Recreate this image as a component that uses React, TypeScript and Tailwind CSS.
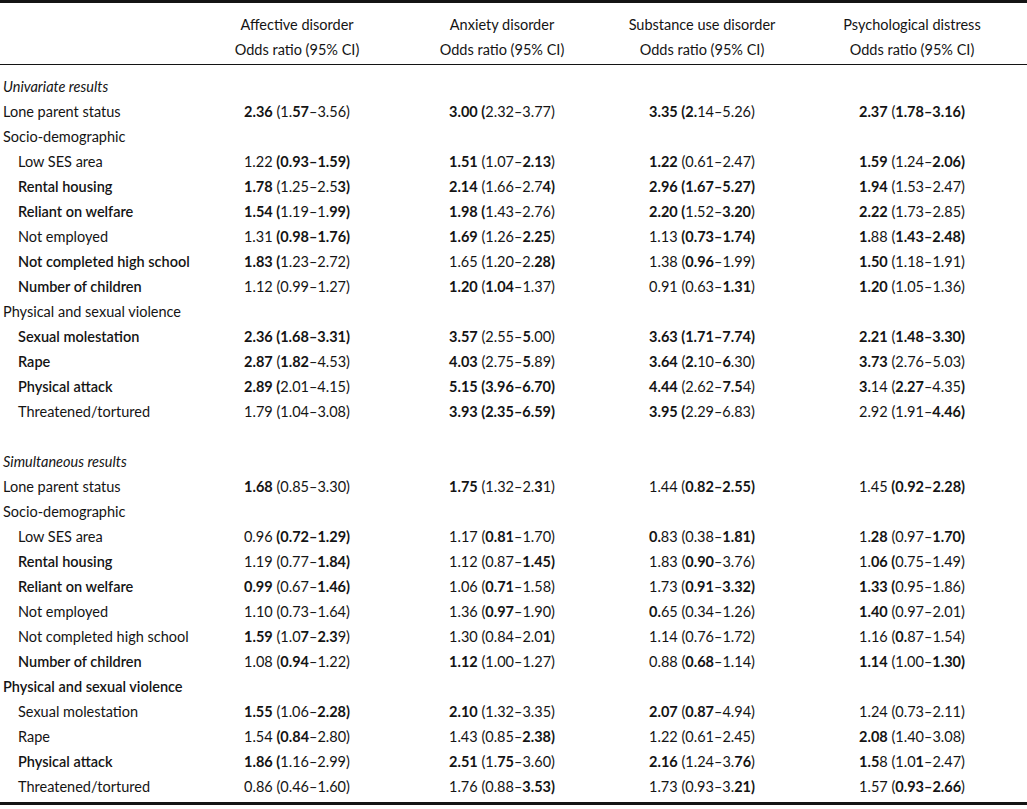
import React from "react";

// bold parts are marked with ** in the strings
function Rich({ text }: { text: string }) {
  const parts = text.split("**");
  return (
    <>
      {parts.map((p, i) =>
        i % 2 === 1 ? (
          <span key={i} className="font-bold">
            {p}
          </span>
        ) : (
          <span key={i}>{p}</span>
        )
      )}
    </>
  );
}

type Row =
  | { kind: "section"; label: string }
  | { kind: "group"; label: string; bold?: boolean }
  | { kind: "blank" }
  | { kind: "data"; label: string; indent?: boolean; bold?: boolean; vals: string[] };

const univariate: Row[] = [
  { kind: "section", label: "Univariate results" },
  { kind: "data", label: "Lone parent status", vals: ["**2.36** (1.**57**–3.56)", "**3.00 (**2.32–3.77)", "**3.35 (2.**14–5.26)", "**2.37** (**1.78–3.16)**"] },
  { kind: "group", label: "Socio-demographic" },
  { kind: "data", label: "Low SES area", indent: true, vals: ["1.22 **(0.93–1.59)**", "**1.51** (1.07–**2.13**)", "**1.22** (0.61–2.47)", "**1.59** (1.24–**2.06)**"] },
  { kind: "data", label: "Rental housing", indent: true, bold: true, vals: ["**1.78** (1.25–2.5**3)**", "**2.14** (1.66–2.7**4)**", "**2.96 (1.67–5.27)**", "**1.94** (1.53–2.47)"] },
  { kind: "data", label: "Reliant on welfare", indent: true, bold: true, vals: ["**1.54 (**1.19–1.**99)**", "**1.98 (**1.43–2.76)", "**2.20 (**1.52–**3.20**)", "**2.22** (1.73–2.85)"] },
  { kind: "data", label: "Not employed", indent: true, vals: ["1.31 **(0.98–1.76)**", "**1.69** (1.26–**2.25**)", "1.13 **(0.73–1.74)**", "**1.**88 (**1.43–2.48)**"] },
  { kind: "data", label: "Not completed high school", indent: true, bold: true, vals: ["**1.83 (**1.23–2.72)", "1.65 (1.20–2.**28)**", "1.38 (**0.96**–1.99)", "**1.50** (1.18–1.91)"] },
  { kind: "data", label: "Number of children", indent: true, bold: true, vals: ["1.12 (0.99–1.27)", "**1.20** (**1.04**–1.37)", "0.91 (0.63–**1.31**)", "**1.20** (1.05–1.36)"] },
  { kind: "group", label: "Physical and sexual violence" },
  { kind: "data", label: "Sexual molestation", indent: true, bold: true, vals: ["**2.36 (1.68–3.31)**", "**3.57** (2.55–**5**.00)", "**3.63 (1.71–7.74)**", "**2.21** (**1.48–3.30)**"] },
  { kind: "data", label: "Rape", indent: true, bold: true, vals: ["**2.87** (**1.82**–4.53)", "**4.03** (2.75–**5**.89)", "**3.64** (**2.**10–**6**.30)", "**3.73** (2.76–5.03)"] },
  { kind: "data", label: "Physical attack", indent: true, bold: true, vals: ["**2.89 (**2.01–4.15)", "**5.15 (3.96–6.70)**", "**4.44** (2.62–**7.5**4)", "**3.**14 (**2.27**–4.35**)**"] },
  { kind: "data", label: "Threatened/tortured", indent: true, vals: ["1.79 (1.04–3.08)", "**3.93 (2.35–6.59)**", "**3.95 (**2.29–6.83)", "2.92 (1.91–**4.46)**"] },
];

const simultaneous: Row[] = [
  { kind: "section", label: "Simultaneous results" },
  { kind: "data", label: "Lone parent status", vals: ["**1.68** (0.85–3.30)", "**1.75** (1.32–2.**3**1)", "1.44 (**0.82–2.55)**", "1.45 **(0.92–2.28)**"] },
  { kind: "group", label: "Socio-demographic" },
  { kind: "data", label: "Low SES area", indent: true, vals: ["0.96 **(0.72–1.29)**", "1.17 (**0.81**–1.70)", "**0.**83 (0.38–**1.81)**", "1.**28** (0.97–**1.70)**"] },
  { kind: "data", label: "Rental housing", indent: true, bold: true, vals: ["1.19 (0.77–**1.84)**", "1.12 (0.87–**1.45)**", "1.83 (**0.90**–3.76)", "1.**06 (**0.75–1.49)"] },
  { kind: "data", label: "Reliant on welfare", indent: true, bold: true, vals: ["**0.99** (0.67–**1.46)**", "1.06 (**0.71**–1.58)", "1.73 (**0.91**–**3.32)**", "**1.33 (**0.95–1.86)"] },
  { kind: "data", label: "Not employed", indent: true, vals: ["1.10 (0.73–1.64)", "1.36 (**0.97**–1.90)", "**0.**65 (0.34–1.26)", "**1.40** (0.97–2.01)"] },
  { kind: "data", label: "Not completed high school", indent: true, vals: ["**1.59** (1.0**7**–**2.3**9)", "1.30 (0.84–2.0**1**)", "1.14 (0.76–1.72)", "1.16 (**0.**87–1.54)"] },
  { kind: "data", label: "Number of children", indent: true, bold: true, vals: ["1.08 (**0.94**–1.22)", "**1.12** (1.00–1.27)", "0.88 (**0.68**–1.14)", "**1.14** (1.00–**1.30)**"] },
  { kind: "group", label: "Physical and sexual violence", bold: true },
  { kind: "data", label: "Sexual molestation", indent: true, vals: ["**1.55** (1.06–**2.28)**", "**2.10** (1.32–3.35)", "**2.07** (**0.87**–4.94)", "1.24 (0.73–2.11)"] },
  { kind: "data", label: "Rape", indent: true, vals: ["1.54 **(0.84**–2.80)", "1.43 (0.85–**2.38)**", "1.22 (0.61–2.45)", "**2.08** (1.40–3.08)"] },
  { kind: "data", label: "Physical attack", indent: true, bold: true, vals: ["**1.86 (**1.16–2.99)", "**2.51** (1.**75**–3.60)", "**2.16** (1.24–3.**76**)", "**1.5**8 (1.0**1**–2.47)"] },
  { kind: "data", label: "Threatened/tortured", indent: true, vals: ["0.86 (0.46–1.60)", "1.76 (0.88–**3.53)**", "1.73 (0.93–3.**21)**", "1.57 (**0.93–2.66**)"] },
];

const rows: Row[] = [...univariate, { kind: "blank" }, ...simultaneous];

const headers = ["Affective disorder", "Anxiety disorder", "Substance use disorder", "Psychological distress"];

const grid = "grid grid-cols-[190px_214px_196px_204px_216px_1fr]";

export default function App() {
  return (
    <div
      className="w-[1027px] h-[809px] bg-white text-[#141414] text-[14.5px] overflow-hidden"
      style={{ fontFamily: "Lato, 'Open Sans', sans-serif" }}
    >
      <div className="h-[3px] bg-[#141414]" />
      <div className="pt-[9px] pb-[2px] border-b border-[#141414]">
        <div className={`${grid} h-[25px] items-center`}>
          <div />
          {headers.map((h, i) => (
            <div key={i} className="text-center">
              {h}
            </div>
          ))}
        </div>
        <div className={`${grid} h-[25px] items-center`}>
          <div />
          {headers.map((_, i) => (
            <div key={i} className="text-center">
              Odds ratio (95% CI)
            </div>
          ))}
        </div>
      </div>
      <div className="pt-[9px]">
        {rows.map((r, i) => {
          if (r.kind === "blank") return <div key={i} className="h-[25px]" />;
          if (r.kind === "section")
            return (
              <div key={i} className="h-[25px] flex items-center pl-[3px] italic">
                {r.label}
              </div>
            );
          if (r.kind === "group")
            return (
              <div key={i} className={`h-[25px] flex items-center pl-[3px] ${r.bold ? "font-semibold" : ""}`}>
                {r.label}
              </div>
            );
          return (
            <div key={i} className={`${grid} h-[25px] items-center`}>
              <div className={`${r.indent ? "pl-[18px]" : "pl-[3px]"} ${r.bold ? "font-semibold" : ""} whitespace-nowrap`}>
                {r.label}
              </div>
              {r.vals.map((v, j) => (
                <div key={j} className="text-center whitespace-nowrap">
                  <Rich text={v} />
                </div>
              ))}
            </div>
          );
        })}
      </div>
      <div className="mt-[3px] h-[3px] bg-[#141414]" />
    </div>
  );
}
